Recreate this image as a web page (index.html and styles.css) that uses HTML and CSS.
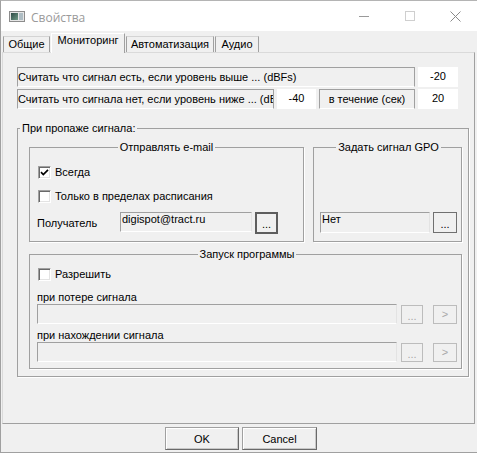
FILE: index.html
```html
<!DOCTYPE html>
<html lang="ru">
<head>
<meta charset="utf-8">
<title>Свойства</title>
<link rel="stylesheet" href="styles.css">
</head>
<body>
<div class="window">
  <div class="titlebar">
    <svg class="app-icon" width="16" height="11" viewBox="0 0 16 11">
      <defs>
        <linearGradient id="ig" x1="0" y1="0" x2="1" y2="1">
          <stop offset="0" stop-color="#2d4a45"/>
          <stop offset="1" stop-color="#6f9a86"/>
        </linearGradient>
      </defs>
      <rect x="0.5" y="0.5" width="15" height="10" fill="#e6e6e6" stroke="#8c8c8c"/>
      <rect x="2" y="2" width="7" height="7" fill="url(#ig)"/>
      <rect x="10" y="2" width="4" height="7" fill="#aebdc4"/>
    </svg>
    <span class="title">Свойства</span>
    <div class="controls">
      <span class="ctl"><svg width="10" height="1" viewBox="0 0 10 1"><rect width="10" height="1" fill="#9a9a9a"/></svg></span>
      <span class="ctl"><svg width="10" height="10" viewBox="0 0 10 10"><rect x="0.5" y="0.5" width="9" height="9" fill="none" stroke="#cfcfcf"/></svg></span>
      <span class="ctl ctl-close"><svg width="11" height="11" viewBox="0 0 11 11"><path d="M0.5 0.5L10.5 10.5M10.5 0.5L0.5 10.5" stroke="#8a8a8a" stroke-width="1"/></svg></span>
    </div>
  </div>

  <div class="tabs">
    <div class="tab tab-general">Общие</div>
    <div class="tab tab-monitor active">Мониторинг</div>
    <div class="tab tab-auto">Автоматизация</div>
    <div class="tab tab-audio">Аудио</div>
  </div>

  <div class="panel">
    <div class="row">
      <div class="static label-above">Считать что сигнал есть, если уровень выше ... (dBFs)</div>
      <div class="edit num">-20</div>
    </div>
    <div class="row">
      <div class="static label-below">Считать что сигнала нет, если уровень ниже ... (dBFs)</div>
      <div class="edit num-small">-40</div>
      <div class="static label-duration">в течение (сек)</div>
      <div class="edit num">20</div>
    </div>

    <fieldset class="group outer">
      <legend class="legend-left">При пропаже сигнала:</legend>
      <div class="group-row">
        <fieldset class="group email">
          <legend class="legend-center">Отправлять e-mail</legend>
          <label class="check check-always"><span class="box"><svg width="9" height="9" viewBox="0 0 9 9"><path d="M1 4.2L3.3 6.5L8 1.8" fill="none" stroke="#000" stroke-width="1.7"/></svg></span>Всегда</label>
          <label class="check check-schedule"><span class="box"></span>Только в пределах расписания</label>
          <div class="recipient">
            <span class="recipient-label">Получатель</span>
            <div class="field email-field">digispot@tract.ru</div>
            <button class="btn btn-default">...</button>
          </div>
        </fieldset>
        <fieldset class="group gpo">
          <legend class="legend-center">Задать сигнал GPO</legend>
          <div class="gpo-row">
            <div class="field gpo-field">Нет</div>
            <button class="btn btn-gpo">...</button>
          </div>
        </fieldset>
      </div>

      <fieldset class="group program">
        <legend class="legend-center">Запуск программы</legend>
        <label class="check check-allow"><span class="box"></span>Разрешить</label>
        <div class="path-label path-label-first">при потере сигнала</div>
        <div class="path-row">
          <div class="field path-field"></div>
          <button class="btn btn-browse" disabled>...</button>
          <button class="btn btn-run" disabled>&gt;</button>
        </div>
        <div class="path-label">при нахождении сигнала</div>
        <div class="path-row">
          <div class="field path-field"></div>
          <button class="btn btn-browse" disabled>...</button>
          <button class="btn btn-run" disabled>&gt;</button>
        </div>
      </fieldset>
    </fieldset>
  </div>

  <div class="footer">
    <button class="dlg-btn btn-ok">OK</button>
    <button class="dlg-btn btn-cancel">Cancel</button>
  </div>
</div>
</body>
</html>
```

FILE: styles.css
```css
* { box-sizing: border-box; }

html, body { margin: 0; padding: 0; }

body {
  width: 477px;
  height: 453px;
  overflow: hidden;
  background: #f0f0f0;
  font-family: "Liberation Sans", Arial, sans-serif;
  font-size: 11px;
  color: #000;
}

.window {
  height: 453px;
  display: flex;
  flex-direction: column;
  border-top: 1px solid #b4b4b4;
  border-left: 1px solid #a0a0a0;
  border-bottom: 1px solid #a0a0a0;
}

/* title bar */
.titlebar {
  height: 30px;
  flex: none;
  background: #fff;
  display: flex;
  align-items: center;
}
.app-icon { margin-left: 8px; flex: none; }
.title {
  margin-left: 6px;
  padding-top: 2px;
  font-family: "Open Sans", "Noto Sans", sans-serif;
  font-size: 12px;
  color: #9a9a9a;
}
.controls { margin-left: auto; display: flex; height: 100%; }
.ctl {
  width: 46px;
  display: flex;
  align-items: center;
  justify-content: center;
}
.ctl-close { width: 44px; }

/* tabs */
.tabs {
  height: 21px;
  flex: none;
  display: flex;
  align-items: flex-end;
  padding-left: 2px;
}
.tab {
  height: 16px;
  border: 1px solid #a0a0a0;
  border-bottom: 0;
  border-top-color: #d4d4d4;
  text-align: center;
  line-height: 14px;
  white-space: nowrap;
}
.tab + .tab { margin-left: 1px; }
.tab.active {
  position: relative;
  z-index: 1;
  height: 20px;
  margin-bottom: -1px;
  background: #f0f0f0;
  border-color: #fff #a0a0a0 transparent #fff;
  line-height: 12px;
}
.tab-general { width: 47px; }
.tab-monitor { width: 74px; }
.tab-auto { width: 88px; }
.tab-audio { width: 44px; }

/* panel */
.panel {
  flex: 1;
  margin: 0 2px 0 1px;
  border: 1px solid;
  border-color: #dadada #a0a0a0 #a0a0a0 #dadada;
  padding: 14px 0 0 14px;
}

.row { display: flex; gap: 3px; }
.row + .row { margin-top: 2px; }

.static {
  height: 20px;
  border: 1px solid;
  border-color: #a0a0a0 #a0a0a0 #fff #a0a0a0;
  line-height: 18px;
  white-space: nowrap;
  overflow: hidden;
}
.label-above { width: 398px; }
.label-below { width: 257px; }
.label-duration { width: 96px; text-align: center; }

.edit {
  height: 20px;
  background: #fff;
  border: 1px solid #fff;
  text-align: center;
  line-height: 17px;
}
.num { width: 40px; }
.num-small { width: 39px; }

/* group boxes */
.group {
  margin: 0;
  min-width: 0;
  border: 1px solid #a0a0a0;
  box-shadow: 1px 1px 0 #fff;
}
.group > legend {
  padding: 0 2px;
  line-height: 14px;
}
.legend-left { margin-left: -9px; }
.legend-center { margin-left: auto; margin-right: auto; }

.outer {
  width: 452px;
  margin-top: 12px;
  padding: 0 6px 7px 11px;
}

.group-row {
  display: flex;
  gap: 9px;
  margin-top: 5px;
}

.email {
  width: 275px;
  flex: none;
  padding: 0 8px 7px;
}
.gpo {
  width: 149px;
  flex: none;
  padding: 0 4px 7px 6px;
}
.program {
  margin-top: 5px;
  padding: 0 4px 6px 7px;
}

/* checkboxes */
.check {
  display: flex;
  align-items: center;
  gap: 4px;
  height: 13px;
  line-height: 13px;
  white-space: nowrap;
}
.check-always { margin-top: 12px; }
.check-schedule { margin-top: 11px; }
.check-allow { margin-top: 7px; margin-left: 1px; }

.box {
  width: 13px;
  height: 13px;
  flex: none;
  background: #fff;
  border: 1px solid;
  border-color: #a0a0a0 #fff #fff #a0a0a0;
  box-shadow: inset 1px 1px 0 #696969, inset -1px -1px 0 #e3e3e3;
  display: flex;
  align-items: center;
  justify-content: center;
}

/* fields & buttons */
.field {
  height: 20px;
  background: #f0f0f0;
  border: 1px solid;
  border-color: #a0a0a0 #e3e3e3 #fff #a0a0a0;
  padding: 0 1px;
  line-height: 13px;
  white-space: nowrap;
  overflow: hidden;
}

.btn {
  padding: 0;
  margin: 0;
  font-family: "Liberation Sans", Arial, sans-serif;
  font-size: 11px;
  color: #000;
  background: #f0f0f0;
  border: 1px solid #707070;
  line-height: 13px;
}
.btn:disabled {
  color: #a8a8a8;
  border-color: #bcbcbc;
}

.recipient {
  display: flex;
  align-items: flex-start;
  margin-top: 9px;
  height: 22px;
}
.recipient-label {
  width: 83px;
  margin-left: -1px;
  line-height: 22px;
}
.email-field { width: 132px; }
.btn-default {
  width: 23px;
  height: 22px;
  margin-left: 3px;
  border: 2px solid #5e5e5e;
  padding-top: 3px;
}

.gpo-row {
  display: flex;
  margin-top: 58px;
  height: 22px;
}
.gpo-field { width: 110px; height: 21px; }
.btn-gpo {
  width: 24px;
  height: 21px;
  margin-left: 3px;
  padding-top: 3px;
}

.path-label {
  line-height: 14px;
  margin-top: 4px;
}
.path-label-first { margin-top: 9px; }
.path-row {
  display: flex;
  align-items: flex-start;
  margin-top: 0;
}
.path-label + .path-row { margin-top: 0; }
.path-row + .path-label { margin-top: 4px; }
.path-field { width: 361px; }
.btn-browse {
  width: 22px;
  height: 19px;
  margin-left: 4px;
  margin-top: 1px;
  padding-top: 3px;
}
.btn-run {
  width: 24px;
  height: 19px;
  margin-left: 10px;
  margin-top: 1px;
}

/* footer */
.footer {
  height: 28px;
  flex: none;
  display: flex;
  justify-content: center;
  gap: 3px;
  padding: 3px 0 0 4px;
}
.dlg-btn {
  height: 23px;
  margin: 0;
  padding: 0;
  font-family: "Liberation Sans", Arial, sans-serif;
  font-size: 11px;
  color: #000;
  background: #f0f0f0;
  border: 1px solid;
  border-color: #a0a0a0 #696969 #696969 #a0a0a0;
  box-shadow: inset 1px 1px 0 #fff, inset -1px -1px 0 #c8c8c8;
}
.btn-ok { width: 74px; }
.btn-cancel { width: 75px; }
```
